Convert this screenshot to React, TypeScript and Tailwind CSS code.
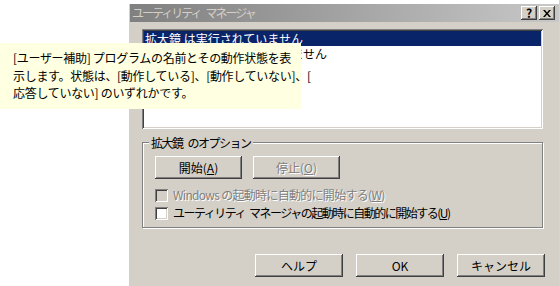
const font = { fontFamily: '"MS UI Gothic", "Noto Sans CJK JP", sans-serif' };

const btn =
  "flex items-center justify-center h-[23px] bg-[#d4d0c8] text-[12px] shadow-[inset_-1px_-1px_#404040,inset_1px_1px_#ffffff,inset_-2px_-2px_#808080]";

const Button = ({ w, disabled, children }: { w: string; disabled?: boolean; children: React.ReactNode }) => (
  <div className={`${btn} ${w} ${disabled ? "text-[#808080] [text-shadow:1px_1px_#ffffff]" : "text-black"}`}>{children}</div>
);

const Check = ({ disabled, track, children }: { disabled?: boolean; track: string; children: React.ReactNode }) => (
  <div className="flex items-center gap-[5px] h-[18px]">
    <div
      className={`w-[13px] h-[13px] shrink-0 shadow-[inset_1px_1px_#808080,inset_-1px_-1px_#ffffff,inset_2px_2px_#404040,inset_-2px_-2px_#d4d0c8] ${
        disabled ? "bg-[#d4d0c8]" : "bg-white"
      }`}
    />
    <span className={`text-[12px] whitespace-nowrap ${track} ${disabled ? "text-[#808080] [text-shadow:1px_1px_#ffffff]" : "text-black"}`}>
      {children}
    </span>
  </div>
);

export default function App() {
  return (
    <div className="relative w-[559px] h-[286px] bg-white overflow-hidden" style={font}>
      <div className="ml-[128px] mt-[3px] w-[433px] h-[283px] bg-[#d4d0c8] shadow-[inset_1px_1px_#ffffff] flex flex-col">
        {/* title bar */}
        <div className="mx-[2px] mt-[1px] h-[18px] flex items-center justify-between pl-[2px] pr-[4px] bg-gradient-to-r from-[#808080] to-[#c8c8c8]">
          <span className="text-[12px] tracking-[-2px] text-[#d4d0c8]">
            <span className="mr-[5px]">ユーティリティ</span>マネージャ
          </span>
          <div className="flex gap-[2px]">
            <div className="w-[16px] h-[14px] bg-[#d4d0c8] flex items-center justify-center text-[12px] font-bold leading-none shadow-[inset_-1px_-1px_#404040,inset_1px_1px_#ffffff,inset_-2px_-2px_#808080]">
              ?
            </div>
            <div className="w-[16px] h-[14px] bg-[#d4d0c8] flex items-center justify-center shadow-[inset_-1px_-1px_#404040,inset_1px_1px_#ffffff,inset_-2px_-2px_#808080]">
              <svg width="8" height="7" viewBox="0 0 8 7">
                <path d="M0 0h2l2 2.5L6 0h2L5 3.5 8 7H6L4 4.5 2 7H0l3-3.5z" fill="#000" />
              </svg>
            </div>
          </div>
        </div>

        {/* list box */}
        <div className="ml-[14px] mt-[7px] w-[401px] h-[100px] bg-white p-[2px] shadow-[inset_1px_1px_#808080,inset_-1px_-1px_#ffffff,inset_2px_2px_#404040,inset_-2px_-2px_#d4d0c8]">
          <div className="h-[15px] bg-[#0a246a] text-white text-[12px] leading-[15px] pl-[1px]">拡大鏡 は実行されていません</div>
          <div className="h-[15px] text-black text-[12px] leading-[15px] pl-[1px]">ナレーター は実行されていません</div>
        </div>

        {/* group box */}
        <div className="relative ml-[14px] mt-[13px] w-[401px] h-[86px] border border-[#808080] shadow-[1px_1px_#ffffff,inset_1px_1px_#ffffff]">
          <span className="absolute -top-[8px] left-[6px] px-[2px] bg-[#d4d0c8] text-[12px] tracking-[-1.5px] leading-[15px] text-black">
            <span className="mr-[5px]">拡大鏡</span>のオプション
          </span>
          <div className="flex gap-[11px] ml-[12px] mt-[13px]">
            <Button w="w-[87px]">
              開始(<u>A</u>)
            </Button>
            <Button w="w-[87px]" disabled>
              停止(<u>O</u>)
            </Button>
          </div>
          <div className="ml-[12px] mt-[7px] flex flex-col">
            <Check disabled track="tracking-[-0.7px]">
              Windows の起動時に自動的に開始する(<u>W</u>)
            </Check>
            <Check track="tracking-[-1.5px]">
              <span className="mr-[4px]">ユーティリティ</span>マネージャの起動時に自動的に開始する(<u>U</u>)
            </Check>
          </div>
        </div>

        {/* footer buttons */}
        <div className="flex ml-[127px] mt-[26px] gap-[13px]">
          <Button w="w-[88px]">ヘルプ</Button>
          <Button w="w-[88px]">OK</Button>
          <Button w="w-[88px]">キャンセル</Button>
        </div>
      </div>

      {/* tooltip */}
      <div className="absolute left-0 top-[43px] w-[301px] h-[66px] bg-[#ffffe1] pl-[13px] pt-[6px] text-[12px] tracking-[-0.3px] leading-[17.5px] text-black whitespace-nowrap">
        [ユーザー補助] プログラムの名前とその動作状態を表
        <br />
        示します。状態は、[動作している]、[動作していない]、[
        <br />
        応答していない] のいずれかです。
      </div>
    </div>
  );
}
